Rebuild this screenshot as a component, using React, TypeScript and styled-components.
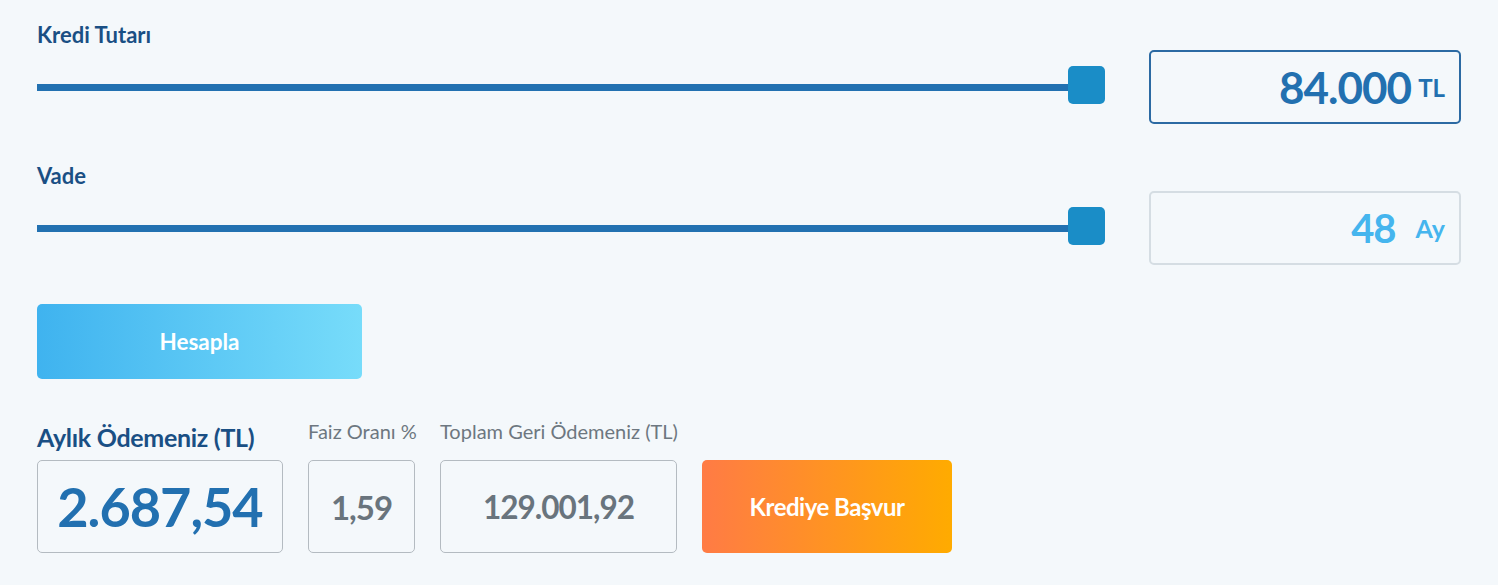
import React from 'react'
import styled, { createGlobalStyle, css } from 'styled-components'

const GlobalStyle = createGlobalStyle`
  body {
    margin: 0;
    background: #f4f8fb;
    font-family: Lato, "Noto Sans", sans-serif;
  }
`

const Page = styled.div`
  padding: 22px 37px 0;
`

const Field = styled.section`
  display: flex;
  flex-direction: column;

  & + & {
    margin-top: 39px;
  }
`

const FieldLabel = styled.label`
  font-size: 22px;
  line-height: 26px;
  font-weight: 700;
  color: #1a4f84;
`

const SliderRow = styled.div`
  display: flex;
  align-items: center;
  gap: 44px;
  margin-top: 2px;
`

const Slider = styled.div`
  flex: 1;
  display: flex;
  align-items: center;
`

const Track = styled.div`
  flex: 1;
  height: 7px;
  background: #2271b1;
`

const Thumb = styled.div`
  width: 37px;
  height: 38px;
  margin-left: -4px;
  margin-bottom: 5px;
  border-radius: 5px;
  background: #1a8dc7;
`

const ValueBox = styled.div<{ $active?: boolean }>`
  box-sizing: border-box;
  width: 312px;
  height: 74px;
  display: flex;
  align-items: center;
  justify-content: flex-end;
  padding-right: 14px;
  border-radius: 5px;
  border: 2px solid ${p => (p.$active ? '#2c6aa3' : '#d5dde3')};
  color: ${p => (p.$active ? '#2270b0' : '#45b5ee')};
  font-weight: 700;
`

const Amount = styled.span<{ $size: number }>`
  font-size: ${p => p.$size}px;
  letter-spacing: -1px;
`

const Unit = styled.span<{ $size: number; $gap: number }>`
  font-size: ${p => p.$size}px;
  margin-left: ${p => p.$gap}px;
`

const gradientButton = css`
  box-sizing: border-box;
  border: none;
  border-radius: 5px;
  color: #fff;
  font-family: Lato, "Noto Sans", sans-serif;
  font-weight: 700;
  cursor: pointer;
`

const CalcButton = styled.button`
  ${gradientButton};
  margin-top: 39px;
  width: 325px;
  height: 75px;
  font-size: 22.5px;
  background: linear-gradient(90deg, #3fb3ef 0%, #77dcfa 100%);
`

const Results = styled.div`
  display: flex;
  align-items: flex-end;
  gap: 25px;
  margin-top: 37px;
`

const Result = styled.div<{ $width: number }>`
  flex: none;
  width: ${p => p.$width}px;
  display: flex;
  flex-direction: column;
`

const ResultLabel = styled.span<{ $main?: boolean }>`
  font-size: ${p => (p.$main ? 25 : 20)}px;
  font-weight: ${p => (p.$main ? 700 : 400)};
  color: ${p => (p.$main ? '#1a4f84' : '#6d7780')};
  line-height: 30px;
  margin-bottom: ${p => (p.$main ? 8 : 14)}px;
  white-space: nowrap;
  letter-spacing: ${p => (p.$main ? '-0.3px' : '0')};
`

const ResultBox = styled.div<{ $main?: boolean; $size: number }>`
  box-sizing: border-box;
  width: 100%;
  height: 93px;
  display: flex;
  align-items: center;
  justify-content: center;
  border: 1px solid #b4bbc1;
  border-radius: 5px;
  font-size: ${p => p.$size}px;
  font-weight: 700;
  letter-spacing: -1px;
  color: ${p => (p.$main ? '#2270b0' : '#69747d')};
`

const ApplyButton = styled.button`
  ${gradientButton};
  flex: none;
  width: 250px;
  height: 93px;
  font-size: 24px;
  letter-spacing: -0.5px;
  background: linear-gradient(90deg, #ff7b45 0%, #ffab00 100%);
`

export default function App() {
  return (
    <Page>
      <GlobalStyle />
      <Field>
        <FieldLabel>Kredi Tutarı</FieldLabel>
        <SliderRow>
          <Slider>
            <Track />
            <Thumb />
          </Slider>
          <ValueBox $active>
            <Amount $size={44}>84.000</Amount>
            <Unit $size={24} $gap={7}>TL</Unit>
          </ValueBox>
        </SliderRow>
      </Field>
      <Field>
        <FieldLabel>Vade</FieldLabel>
        <SliderRow>
          <Slider>
            <Track />
            <Thumb />
          </Slider>
          <ValueBox>
            <Amount $size={40}>48</Amount>
            <Unit $size={25} $gap={20}>Ay</Unit>
          </ValueBox>
        </SliderRow>
      </Field>
      <CalcButton>Hesapla</CalcButton>
      <Results>
        <Result $width={246}>
          <ResultLabel $main>Aylık Ödemeniz (TL)</ResultLabel>
          <ResultBox $size={54} $main>2.687,54</ResultBox>
        </Result>
        <Result $width={107}>
          <ResultLabel>Faiz Oranı %</ResultLabel>
          <ResultBox $size={33}>1,59</ResultBox>
        </Result>
        <Result $width={237}>
          <ResultLabel>Toplam Geri Ödemeniz (TL)</ResultLabel>
          <ResultBox $size={31.5}>129.001,92</ResultBox>
        </Result>
        <ApplyButton>Krediye Başvur</ApplyButton>
      </Results>
    </Page>
  )
}
